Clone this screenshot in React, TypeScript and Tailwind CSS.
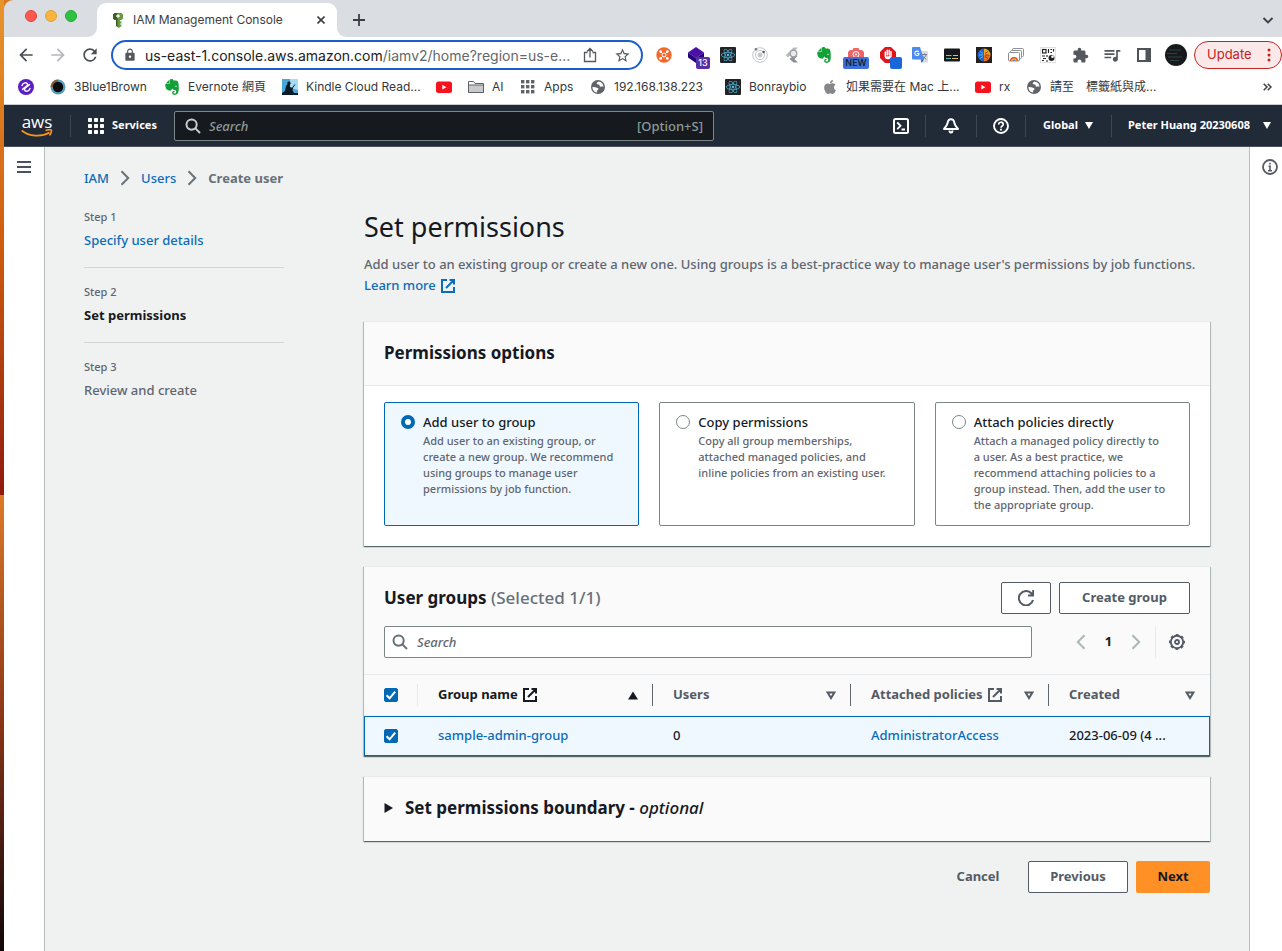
import type { ReactNode } from "react";
import {
  MdArrowBack,
  MdArrowForward,
  MdExtension,
  MdLock,
  MdQueueMusic,
  MdRefresh,
  MdStarBorder,
} from "react-icons/md";
import { FaApple, FaReact } from "react-icons/fa";
import { SiEvernote } from "react-icons/si";

/* ---------- shared drawings ---------- */

const ExternalIcon = () => (
  <svg viewBox="0 0 16 16" className="inline-block size-4 shrink-0" fill="none" stroke="currentColor" strokeWidth="2">
    <path d="M7 2H2v12h12V9M9.5 2H14v4.5M6 10l8-8" />
  </svg>
);

const SearchIcon = () => (
  <svg viewBox="0 0 16 16" className="size-4 shrink-0" fill="none" stroke="currentColor" strokeWidth="2">
    <circle cx="6.6" cy="6.6" r="5.1" />
    <path d="M10.4 10.4 15 15" />
  </svg>
);

const Caret = () => (
  <svg viewBox="0 0 8 7" className="h-[7px] w-2 shrink-0" fill="currentColor">
    <path d="M0 0h8L4 7z" />
  </svg>
);

const SortIcon = () => (
  <svg viewBox="0 0 10 9" className="h-[9px] w-2.5 shrink-0" fill="none" stroke="currentColor" strokeWidth="2">
    <path d="M1.6 1.5h6.8L5 7z" />
  </svg>
);

const Chevron = ({ flip = false }: { flip?: boolean }) => (
  <svg viewBox="0 0 10 16" className="h-4 w-2.5 shrink-0" fill="none" stroke="currentColor" strokeWidth="2">
    <path d={flip ? "M8.5 1.2 1.8 8l6.7 6.8" : "M1.5 1.2 8.2 8l-6.7 6.8"} />
  </svg>
);

const YoutubeIcon = () => (
  <svg viewBox="0 0 16 16" className="size-4">
    <rect y="2.5" width="16" height="11.500" rx="2.5" fill="#f8121d" />
    <path d="M6.3 5.8v4.8L10.4 8.200z" fill="#fff" />
  </svg>
);

const ReactIcon = () => (
  <span className="flex size-4 items-center justify-center rounded-[1px] bg-[#212327] text-[#52bfe0]">
    <FaReact className="size-3.5" />
  </span>
);

const GlobeIcon = () => (
  <svg viewBox="0 0 16 16" className="size-4">
    <circle cx="8" cy="8" r="7" fill="#5f6368" />
    <path
      d="M2.400 8.300c1.500-.6 3.200.4 4.600.5.900.1 1.500.6 1.400 1.400-.1.700-1.200.8-1.300 1.600 0 .8.300 1.300-.2 1.800A5.700 5.700 0 0 1 2.400 8.300zM8.300 2.500c-.6.9-1.700 1-1.600 1.900.1 1 1.500.8 2.400 1.100.9.400 0 1.500.9 2 1 .5 1.800-.3 3.500.2A5.700 5.700 0 0 0 8.300 2.500z"
      fill="#fff"
    />
  </svg>
);

/* ---------- browser chrome ---------- */

const TabStrip = () => (
  <div className="flex h-[37px] items-end bg-[#dadde2]">
    <div className="flex w-[83px] items-center gap-2 self-center pb-[5px] pl-[21px]">
      <span className="size-3 rounded-full border border-[#e0443e] bg-[#fe5850]" />
      <span className="size-3 rounded-full border border-[#dea035] bg-[#fcb43d]" />
      <span className="size-3 rounded-full border border-[#27a83a] bg-[#2fc242]" />
    </div>
    <svg viewBox="0 0 10 10" className="h-2.5 w-2.5 text-white" fill="currentColor">
      <path d="M10 0v10H0c6 0 10-4 10-10z" />
    </svg>
    <div className="flex h-[34px] w-60 items-center rounded-t-[9px] bg-white px-4 text-[12px] text-[#3c4043]">
      <svg viewBox="0 0 10 15" className="h-[15px] w-2.5">
        <path d="M1.500 0h7L10 1.500v4L8.500 7H7v1.500h1.500v2H7v1h1.500V13L6 15l-2-1.200V7H1.500L0 5.500v-4z" fill="#6a9a3f" />
        <path d="M4.500 7v7L3 13V7H1.500L0 5.500v-4L1.500 0h3z" fill="#3d5f26" />
        <path d="M5 1.200v3.600M3.200 3h3.600" stroke="#fff" strokeWidth="1.300" />
      </svg>
      <span className="ml-2.5 grow whitespace-nowrap">IAM Management Console</span>
      <button aria-label="Close tab" className="-mr-2 flex size-4 items-center justify-center text-[#3c4043]">
        <svg viewBox="0 0 8 8" className="size-2" stroke="currentColor" strokeWidth="1.600">
          <path d="m.5.5 7 7M7.500.5l-7 7" />
        </svg>
      </button>
    </div>
    <svg viewBox="0 0 10 10" className="h-2.5 w-2.5 text-white" fill="currentColor">
      <path d="M0 0v10h10C4 10 0 6 0 0z" />
    </svg>
    <button aria-label="New tab" className="mb-[11px] ml-1.5 flex size-3 text-[#3c4043]">
      <svg viewBox="0 0 12 12" className="size-3" stroke="currentColor" strokeWidth="1.800">
        <path d="M6 0v12M0 6h12" />
      </svg>
    </button>
    <button aria-label="Search tabs" className="mr-2 mb-3 ml-auto text-[#3c4043]">
      <svg viewBox="0 0 12 10" className="h-2.5 w-3" fill="none" stroke="currentColor" strokeWidth="1.800">
        <path d="m1.500 3 4.500 4.500L10.500 3" />
      </svg>
    </button>
  </div>
);

const extensions: { name: string; icon: ReactNode }[] = [
  {
    name: "Orange cluster",
    icon: (
      <svg viewBox="0 0 16 16" className="size-4">
        <circle cx="8" cy="8" r="7.700" fill="#f5672b" />
        <path d="M5 5l6 6M11 5l-6 6" stroke="#fff" strokeWidth="1" />
        <g fill="#fff">
          <circle cx="4.600" cy="4.600" r="1.400" />
          <circle cx="11.400" cy="4.600" r="1.400" />
          <circle cx="4.600" cy="11.400" r="1.400" />
          <circle cx="11.400" cy="11.400" r="1.400" />
        </g>
        <circle cx="8" cy="8" r="2" fill="#f5672b" stroke="#fff" />
      </svg>
    ),
  },
  {
    name: "Wappalyzer",
    icon: (
      <span className="relative">
        <svg viewBox="0 0 16 16" className="size-4">
          <path d="M8 0l8 5.500L8 11 0 5.500z" fill="#4a10a8" />
          <path d="M0 5.500L8 11l8-5.500v5L8 16l-8-5.500z" fill="#28047a" />
        </svg>
        <span className="absolute top-2.5 left-2 flex h-3 w-3.5 items-center justify-center rounded-[2px] bg-[#5b2ea6] text-[9px] font-medium text-white">
          13
        </span>
      </span>
    ),
  },
  { name: "React tools", icon: <ReactIcon /> },
  {
    name: "Orbit",
    icon: (
      <svg viewBox="0 0 16 16" className="size-4" fill="none" stroke="#c4c6c8" strokeWidth="1">
        <circle cx="8" cy="8" r="7.300" />
        <circle cx="8" cy="8" r="4.600" />
        <circle cx="8" cy="8" r="2" fill="#c4c6c8" />
        <circle cx="4" cy="2.200" r="1.300" fill="#777" stroke="none" />
        <circle cx="11.600" cy="5" r="1.300" fill="#555" stroke="none" />
      </svg>
    ),
  },
  {
    name: "Arrow search",
    icon: (
      <svg viewBox="0 0 16 16" className="size-4">
        <path d="M9.500.5H14L4 10.500 1.700 8.300z" fill="#b9bbbd" />
        <path d="M9 9h4.500L10.500 12l3.500 3.500H9.500L5.500 12z" fill="#8d9093" />
        <circle cx="9.500" cy="6.500" r="3.300" fill="#e8eaec" stroke="#9da0a3" strokeWidth="1.300" />
      </svg>
    ),
  },
  { name: "Evernote clipper", icon: <SiEvernote className="size-4 text-[#14a038]" /> },
  {
    name: "Camera",
    icon: (
      <span className="relative">
        <svg viewBox="0 0 16 16" className="size-4">
          <path d="M4.500 3l1-2h5l1 2H14l2 2v8H0V5l2-2z" fill="#ee6568" />
          <circle cx="8" cy="7.500" r="3" fill="none" stroke="#fff" />
          <circle cx="8" cy="7.500" r="1" fill="#fff" />
        </svg>
        <span className="absolute top-2.5 -left-[5px] flex h-3 w-[26px] items-center justify-center rounded-[2px] bg-[#3d70d8] text-[9px] font-medium text-[#10182c]">
          NEW
        </span>
      </span>
    ),
  },
  {
    name: "Ad blocker",
    icon: (
      <span className="relative">
        <svg viewBox="0 0 16 16" className="size-4">
          <path d="M5 0h6l5 5v6l-5 5H5l-5-5V5z" fill="#e2141b" />
          <path
            d="M5.300 9V5M7.200 8V3.200M9.200 8V3.200M11 8.500V4.500M5.300 9.500c.5 2.500 5 2.800 5.700-.5"
            stroke="#fff"
            strokeWidth="1.500"
            strokeLinecap="round"
            fill="#fff"
          />
        </svg>
        <span className="absolute top-2.5 left-2.5 size-3 rounded-[2px] bg-[#1967d8]" />
      </span>
    ),
  },
  {
    name: "Google Translate",
    icon: (
      <svg viewBox="0 0 16 16" className="size-4">
        <path d="M6 4h9a1 1 0 0 1 1 1v10.500H9z" fill="#d9dce0" />
        <path d="M0 1a1 1 0 0 1 1-1h7l4 12.500H1a1 1 0 0 1-1-1z" fill="#4c8af0" />
        <path d="M9 12.500h3L9.500 16z" fill="#2f5fbd" />
        <path d="M7.200 6.500H5M6.800 5a2.200 2.200 0 1 0 .4 1.500" fill="none" stroke="#fff" strokeWidth="1.100" />
        <path d="M10 7.500h5M12.500 6.500v1M14 7.500c-.5 2-1.500 3-3 4M11.500 9.500l2.500 3" fill="none" stroke="#687078" strokeWidth=".9" />
      </svg>
    ),
  },
  {
    name: "Subtitles",
    icon: (
      <svg viewBox="0 0 16 16" className="size-4">
        <rect y="1.500" width="16" height="13" rx="1" fill="#17191c" />
        <path d="M2 8.500h5.500" stroke="#e7a08a" strokeWidth="1" />
        <path d="M9 8.500h5M8 11.500h6" stroke="#d9c268" strokeWidth="1" />
        <path d="M2 11.500h5" stroke="#58b9a4" strokeWidth="1" />
      </svg>
    ),
  },
  {
    name: "Brain",
    icon: (
      <svg viewBox="0 0 16 16" className="size-4">
        <rect width="16" height="16" fill="#25201c" />
        <path d="M8 1.500a6.500 6.500 0 0 0 0 13z" fill="#1f66d2" />
        <path d="M8 1.500a6.500 6.500 0 0 1 6.500 6.500H8z" fill="#f2a51e" />
        <path d="M14.500 8A6.500 6.500 0 0 1 8 14.500V8z" fill="#e8701f" />
        <path d="M4 4.500l3 2M3 8h4M4 11.500l3-2" stroke="#6fc3ee" strokeWidth=".8" />
        <path d="M12 4.500l-3 2M13 8H9M12 11.500l-3-2" stroke="#a02a18" strokeWidth=".9" />
      </svg>
    ),
  },
  {
    name: "Rainbow cards",
    icon: (
      <svg viewBox="0 0 16 16" className="size-4">
        <g fill="#fff" stroke="#8d9093" strokeWidth="1">
          <rect x="4.500" y="1.500" width="11" height="8" rx="1" />
          <rect x="2.500" y="3.500" width="11" height="8" rx="1" />
          <rect x=".5" y="5.500" width="11" height="8.500" rx="1" />
        </g>
        <path d="M2 14a4 4 0 0 1 8 0z" fill="#ea4335" />
        <path d="M3.300 14a2.700 2.700 0 0 1 5.400 0z" fill="#fbbc05" />
        <path d="M4.500 14a1.500 1.500 0 0 1 3 0z" fill="#4285f4" />
      </svg>
    ),
  },
  {
    name: "QR code",
    icon: (
      <svg viewBox="0 0 16 16" className="size-4">
        <rect x=".5" y=".5" width="15" height="15" fill="#fff" stroke="#e0e0e0" />
        <g fill="none" stroke="#222" strokeWidth="1.200">
          <rect x="2.500" y="2.500" width="3.500" height="3.500" />
          <path d="M8.500 2v4M10.500 2.500h1.500M13.500 2v2.500M10.500 5.500h1.500M2 9h3M7 8v2M3 11.500h3M2 13.500h2M6 14h2" />
        </g>
        <circle cx="11.500" cy="11" r="3" fill="#222" />
        <circle cx="12.500" cy="9.800" r="1.300" fill="#fff" />
      </svg>
    ),
  },
  { name: "Extensions", icon: <MdExtension className="size-[17px] text-[#55595e]" /> },
  { name: "Media", icon: <MdQueueMusic className="size-5 text-[#55595e]" /> },
  {
    name: "Side panel",
    icon: (
      <svg viewBox="0 0 14 14" className="size-3.5">
        <path d="M0 0h14v14H0z" fill="#50545a" />
        <path d="M2 2h6.500v10H2z" fill="#fff" />
      </svg>
    ),
  },
];

const Toolbar = () => (
  <div className="flex h-9 items-center bg-white text-[#55595e]">
    <div className="flex w-[107px] shrink-0 items-center gap-3 pl-3">
      <button aria-label="Back" className="text-[#4a4e53]">
        <MdArrowBack className="size-5" />
      </button>
      <button aria-label="Forward" className="text-[#b4b6b9]">
        <MdArrowForward className="size-5" />
      </button>
      <button aria-label="Reload" className="text-[#4a4e53]">
        <MdRefresh className="size-5" />
      </button>
    </div>
    <div className="flex h-[30px] min-w-0 grow items-center rounded-full border-2 border-[#1a5dcb] px-2.5">
      <MdLock className="size-3.5 shrink-0" />
      <div className="ml-2 min-w-0 grow truncate text-[14px] text-[#63676b]">
        <span className="text-[#202124]">us-east-1.console.aws.amazon.com</span>/iamv2/home?region=us-e...
      </div>
      <div className="flex shrink-0 items-center gap-4">
        <button aria-label="Share">
          <svg viewBox="0 0 16 16" className="size-4" fill="none" stroke="currentColor" strokeWidth="1.300">
            <path d="M5.500 5.500h-3v9h11v-9h-3M8 10.500V1.500M5 4.500l3-3 3 3" />
          </svg>
        </button>
        <button aria-label="Bookmark this page">
          <MdStarBorder className="size-[17px]" />
        </button>
      </div>
    </div>
    <ul className="ml-[5px] flex shrink-0">
      {extensions.map((e) => (
        <li key={e.name}>
          <button aria-label={e.name} className="flex size-8 items-center justify-center">
            {e.icon}
          </button>
        </li>
      ))}
      <li>
        <button aria-label="Profile" className="flex size-8 items-center justify-center">
          <svg viewBox="0 0 22 22" className="size-[22px]">
            <circle cx="11" cy="11" r="11" fill="#17191b" />
            <path d="M4 6h12M2 9.500h10M3 13h14M5 16.500h9" stroke="#2d4446" />
          </svg>
        </button>
      </li>
    </ul>
    <button className="ml-0.5 flex h-7 w-22 shrink-0 items-center justify-between rounded-full border border-[#c5221f] bg-[#fae9e8] pr-2.5 pl-3 text-[13px] text-[#c5221f]">
      Update
      <svg viewBox="0 0 4 14" className="h-3.5 w-1" fill="currentColor">
        <circle cx="2" cy="2" r="1.500" />
        <circle cx="2" cy="7" r="1.500" />
        <circle cx="2" cy="12" r="1.500" />
      </svg>
    </button>
  </div>
);

const bookmarks: { label: string; width: string; icon: ReactNode }[] = [
  {
    label: "",
    width: "",
    icon: (
      <svg viewBox="0 0 16 16" className="size-4">
        <circle cx="8" cy="8" r="8" fill="#5a1fc4" />
        <path
          d="M4 6.500C5 3.500 8.500 3 9.500 5S6 8.500 4.500 10.500M12 9.500c-1 3-4.500 3.500-5.500 1.500S10 7.500 11.500 5.500"
          fill="none"
          stroke="#fff"
          strokeWidth="1.400"
          strokeLinecap="round"
        />
      </svg>
    ),
  },
  {
    label: "3Blue1Brown",
    width: "w-[74px]",
    icon: (
      <svg viewBox="0 0 16 16" className="size-4">
        <circle cx="8" cy="8" r="7.500" fill="#5b9dbd" />
        <path d="M8 .5v7.500H.5A7.500 7.500 0 0 1 8 .5z" fill="#8a5a3c" />
        <circle cx="8" cy="8" r="5.200" fill="#0a0c10" />
      </svg>
    ),
  },
  { label: "Evernote 網頁", width: "w-[78px]", icon: <SiEvernote className="size-4 text-[#14a038]" /> },
  {
    label: "Kindle Cloud Read...",
    width: "w-[114px]",
    icon: (
      <svg viewBox="0 0 16 16" className="size-4">
        <rect width="16" height="16" fill="#4aa6d6" />
        <path d="M8 0h8v11L8 9z" fill="#a5dcf2" />
        <path d="M0 14l3-2 1-5 1.500-2a1.700 1.700 0 1 1 2.500.5L8 8l3 1-.5 2.500 1.500 2.500h4v2H0z" fill="#0b1a26" />
        <path d="M10 9.500l3-4" stroke="#0b1a26" />
      </svg>
    ),
  },
  { label: "", width: "", icon: <YoutubeIcon /> },
  {
    label: "AI",
    width: "w-[12px]",
    icon: (
      <svg viewBox="0 0 16 16" className="size-4" stroke="#5f6368">
        <path d="M.5 13.500v-11h5l1.500 2h8.500v9z" fill="#fff" />
        <path d="M.5 6h15v7.500H.5z" fill="#c9cacc" />
      </svg>
    ),
  },
  {
    label: "Apps",
    width: "w-[30px]",
    icon: (
      <svg viewBox="0 0 16 16" className="size-4" fill="#5f6368">
        {[1, 6, 11].map((y) =>
          [1, 6, 11].map((x) => <rect key={`${x}-${y}`} x={x} y={y} width="3.400" height="3.400" />),
        )}
      </svg>
    ),
  },
  { label: "192.168.138.223", width: "w-[95px]", icon: <GlobeIcon /> },
  { label: "Bonraybio", width: "w-[57px]", icon: <ReactIcon /> },
  { label: "如果需要在 Mac 上...", width: "w-[113px]", icon: <FaApple className="size-4 text-[#85878a]" /> },
  { label: "rx", width: "w-[11px]", icon: <YoutubeIcon /> },
  { label: "請至　標籤紙與成...", width: "w-[106px]", icon: <GlobeIcon /> },
];

const BookmarksBar = () => (
  <nav
    aria-label="Bookmarks"
    className="flex h-8 items-center border-b border-[#c9ccd1] bg-white px-3.5 pb-[3px] text-[12px] text-[#34373b]"
  >
    <ul className="flex grow gap-4">
      {bookmarks.map((b, i) => (
        <li key={i}>
          <a href="#" aria-label={b.label || "Bookmark"} className="flex h-4 items-center gap-2 whitespace-nowrap">
            {b.icon}
            {b.label && <span className={b.width}>{b.label}</span>}
          </a>
        </li>
      ))}
    </ul>
    <button aria-label="More bookmarks" className="-mr-1 text-[#3c4043]">
      <svg viewBox="0 0 9 8" className="h-2 w-[9px]" fill="none" stroke="currentColor" strokeWidth="1.500">
        <path d="M.7.700 4 4 .7 7.300M4.700.7 8 4 4.700 7.300" />
      </svg>
    </button>
  </nav>
);

/* ---------- AWS header ---------- */

const Divider = () => <span className="h-[22px] w-px shrink-0 bg-[#3d4653]" />;

const AwsHeader = () => (
  <header className="flex h-[42px] items-center border-b border-[#49505b] bg-[#212a37] text-[11px] font-bold text-white">
    <a href="#" aria-label="AWS home" className="flex w-[66px] shrink-0 flex-col items-center">
      <span className="font-['Open_Sans',sans-serif] text-[17px] leading-[14px] font-medium">aws</span>
      <svg viewBox="0 0 32 8" className="h-2 w-8" fill="none" stroke="#f7931e" strokeWidth="1.700">
        <path d="M.7 1.500C8 7.500 20 8.500 28.500 3.500M24.500 1.500c4-1.200 6-.8 6 .2s-.6 3-2 4.800" />
      </svg>
    </a>
    <Divider />
    <button className="ml-[17px] flex shrink-0 items-center gap-2">
      <svg viewBox="0 0 16 16" className="size-4" fill="currentColor">
        {[0, 6, 12].map((y) =>
          [0, 6, 12].map((x) => <rect key={`${x}-${y}`} x={x} y={y} width="4" height="4" rx=".8" />),
        )}
      </svg>
      <span className="w-[45px]">Services</span>
    </button>
    <label className="ml-[17px] flex h-[30px] w-[540px] items-center rounded-[2px] border border-[#7b8787] bg-[#16191d] px-2.5 text-[13px] font-medium text-[#8d9a99]">
      <span className="text-[#c8cdcd]">
        <SearchIcon />
      </span>
      <input
        type="text"
        aria-label="Search services"
        placeholder="Search"
        className="ml-2 min-w-0 grow bg-transparent pt-0.5 outline-none placeholder:text-[#8d9a99] placeholder:italic"
      />
      <span className="pt-0.5">[Option+S]</span>
    </label>
    <div className="ml-auto flex shrink-0 items-center">
      <button aria-label="CloudShell" className="flex w-12 justify-center">
        <svg viewBox="0 0 16 16" className="size-4" fill="none" stroke="currentColor" strokeWidth="2">
          <rect x="1" y="1" width="14" height="14" rx="1.500" />
          <path d="m4.200 4.500 3.300 3.300-3.300 3.300M8.500 11.500H12" strokeWidth="1.800" />
        </svg>
      </button>
      <Divider />
      <button aria-label="Notifications" className="flex w-[50px] justify-center">
        <svg viewBox="0 0 16 16" className="size-4" fill="none" stroke="currentColor" strokeWidth="1.900" strokeLinejoin="round">
          <path d="M8 1.200c1.800 0 3 1.300 3.200 3 .3 2.500 1.600 4.300 3.800 6.800H1c2.200-2.500 3.500-4.300 3.800-6.800.2-1.700 1.400-3 3.200-3z" />
          <path d="M6.500 12.500c0 2.700 3 2.700 3 0" />
        </svg>
      </button>
      <Divider />
      <button aria-label="Help" className="flex w-12 justify-center">
        <svg viewBox="0 0 16 16" className="size-4" fill="none" stroke="currentColor" strokeWidth="1.900">
          <circle cx="8" cy="8" r="7" />
          <path d="M5.700 6.500c0-3 4.600-3 4.600-.2C10.300 8 8 7.900 8 9.700" strokeWidth="1.700" />
          <path d="M8 10.800v1.700" />
        </svg>
      </button>
      <Divider />
      <button className="flex w-[85px] items-center gap-[7px] pl-[17px]">
        <span className="w-[35px]">Global</span>
        <Caret />
      </button>
      <Divider />
      <button className="flex items-center gap-[7px] pr-[11px] pl-4">
        <span className="w-[128px] text-left whitespace-nowrap">Peter Huang 20230608</span>
        <Caret />
      </button>
    </div>
  </header>
);

/* ---------- page ---------- */

const steps = [
  { step: "Step 1", title: "Specify user details", state: "link" },
  { step: "Step 2", title: "Set permissions", state: "current" },
  { step: "Step 3", title: "Review and create", state: "todo" },
];

const StepList = () => (
  <nav aria-label="Steps">
    <ol>
      {steps.map((s, i) => (
        <li key={s.step} className={i < steps.length - 1 ? "border-b border-[#d0d5d5] py-4" : "py-4"}>
          <div className="text-[11px] leading-4 text-[#5f6670]">{s.step}</div>
          <div className="mt-1 text-[13px] leading-[22px]">
            {s.state === "link" && (
              <a href="#" className="text-[#0b6cb8]">
                {s.title}
              </a>
            )}
            {s.state === "current" && <span className="font-bold text-[#16191f]">{s.title}</span>}
            {s.state === "todo" && <span className="text-[#5f6670]">{s.title}</span>}
          </div>
        </li>
      ))}
    </ol>
  </nav>
);

const Card = ({ children }: { children: ReactNode }) => (
  <section className="border-t border-[#e6eaea] bg-white shadow-[0_1px_1px_0_rgba(0,28,36,0.45),1px_1px_1px_0_rgba(0,28,36,0.2),-1px_1px_1px_0_rgba(0,28,36,0.2)]">
    {children}
  </section>
);

const options = [
  {
    title: "Add user to group",
    text: "Add user to an existing group, or create a new group. We recommend using groups to manage user permissions by job function.",
  },
  {
    title: "Copy permissions",
    text: "Copy all group memberships, attached managed policies, and inline policies from an existing user.",
  },
  {
    title: "Attach policies directly",
    text: "Attach a managed policy directly to a user. As a best practice, we recommend attaching policies to a group instead. Then, add the user to the appropriate group.",
  },
];

const PermissionOptions = () => (
  <Card>
    <h2 className="border-b border-[#e6eaea] bg-[#fafafa] px-5 pt-[19px] pb-[21px] text-[17px] leading-[23px] font-bold">
      Permissions options
    </h2>
    <div className="grid grid-cols-3 gap-5 px-5 pt-4 pb-5">
      {options.map((o, i) => (
        <label
          key={o.title}
          className="flex gap-2 rounded-[2px] border border-[#7b8787] pt-2 pr-[23px] pb-3 pl-4 has-checked:border-[#0068b4] has-checked:bg-[#f0f8ff]"
        >
          <input
            type="radio"
            name="permission-option"
            defaultChecked={i === 0}
            className="mt-1 size-3.5 shrink-0 appearance-none rounded-full border border-[#7b8787] bg-white checked:border-4 checked:border-[#0068b4]"
          />
          <span className="block">
            <span className="block text-[13px] leading-[22px]">{o.title}</span>
            <span className="block text-[11px] leading-4 text-[#5f6670]">{o.text}</span>
          </span>
        </label>
      ))}
    </div>
  </Card>
);

const Checkbox = ({ label }: { label: string }) => (
  <label className="grid size-3.5">
    <input
      type="checkbox"
      aria-label={label}
      defaultChecked
      className="peer col-start-1 row-start-1 size-3.5 appearance-none rounded-[2px] border border-[#7b8787] bg-white checked:border-[#0068b4] checked:bg-[#0068b4]"
    />
    <svg
      viewBox="0 0 14 14"
      className="invisible col-start-1 row-start-1 size-3.5 peer-checked:visible"
      fill="none"
      stroke="#fff"
      strokeWidth="2"
    >
      <path d="m2.600 7.300 3 3L11.200 3.600" />
    </svg>
  </label>
);

const HeadCell = ({ children, icon, last = false }: { children: ReactNode; icon: ReactNode; last?: boolean }) => (
  <th scope="col" className="p-0 font-bold">
    <div className={last ? "flex h-10 items-center pr-[15px] pl-5" : "flex h-10 items-center pl-5"}>
      <button className="flex grow items-center justify-between">
        <span className="flex items-center gap-1 whitespace-nowrap">{children}</span>
        {icon}
      </button>
      {!last && <span className="ml-3.5 h-[22px] w-px bg-[#5f6670]" />}
    </div>
  </th>
);

const UserGroups = () => (
  <Card>
    <div className="border-b border-[#e6eaea] bg-[#fafafa] px-5 pt-[15px] pb-4">
      <div className="flex items-center gap-2">
        <h2 className="grow text-[17px] leading-6 font-bold">
          User groups <span className="font-medium text-[#687078]">(Selected 1/1)</span>
        </h2>
        <button
          aria-label="Refresh"
          className="flex h-8 w-[50px] items-center justify-center rounded-[2px] border border-[#545b64] bg-white text-[#545b64]"
        >
          <svg viewBox="0 0 16 16" className="size-4" fill="none" stroke="currentColor" strokeWidth="2">
            <path d="M15 10A7.200 7.200 0 1 1 13.500 3.500L15 5.200M15.200 0v5.500H10" />
          </svg>
        </button>
        <button className="h-8 w-[131px] rounded-[2px] border border-[#545b64] bg-white text-[13px] font-bold text-[#545b64]">
          Create group
        </button>
      </div>
      <div className="mt-3 flex items-center">
        <label className="flex h-8 min-w-0 grow items-center rounded-[2px] border border-[#7b8787] bg-white px-[7px] text-[13px] text-[#687078]">
          <SearchIcon />
          <input
            type="text"
            aria-label="Search user groups"
            placeholder="Search"
            className="ml-[9px] min-w-0 grow bg-transparent pt-0.5 outline-none placeholder:text-[#5f6670] placeholder:italic"
          />
        </label>
        <div className="ml-11 flex shrink-0 items-center text-[#aab7b8]">
          <button aria-label="Previous page">
            <Chevron flip />
          </button>
          <button className="mx-[9px] w-[27px] text-[13px] font-bold text-[#16191f]">1</button>
          <button aria-label="Next page">
            <Chevron />
          </button>
          <span className="ml-3.5 h-8 w-px bg-[#e6eaea]" />
          <button aria-label="Preferences" className="mr-[5px] ml-[13px] text-[#545b64]">
            <svg viewBox="0 0 16 16" className="size-4" fill="none" stroke="currentColor">
              <circle cx="8" cy="8" r="6.200" strokeWidth="1.900" />
              <circle cx="8" cy="8" r="7.200" strokeWidth="1.600" strokeDasharray="2.800 2.855" strokeDashoffset="1.400" />
              <circle cx="8" cy="8" r="2" strokeWidth="1.800" />
            </svg>
          </button>
        </div>
      </div>
    </div>
    <table className="w-full table-fixed text-left text-[13px]">
      <colgroup>
        <col className="w-[54px]" />
        <col />
        <col className="w-[198px]" />
        <col className="w-[198px]" />
        <col className="w-[161px]" />
      </colgroup>
      <thead className="border-b border-[#f0f2f2] bg-[#fafafa] text-[#545b64]">
        <tr>
          <th scope="col" className="p-0">
            <div className="flex h-10 items-center justify-between pl-5">
              <Checkbox label="Select all groups" />
              <span className="h-[22px] w-px bg-[#e6eaea]" />
            </div>
          </th>
          <HeadCell
            icon={
              <svg viewBox="0 0 10 9" className="h-[9px] w-2.5 shrink-0" fill="#16191f">
                <path d="M0 8.500h10L5 .5z" />
              </svg>
            }
          >
            <span className="text-[#16191f]">Group name</span>
            <span className="flex text-[#16191f]">
              <ExternalIcon />
            </span>
          </HeadCell>
          <HeadCell icon={<SortIcon />}>Users</HeadCell>
          <HeadCell icon={<SortIcon />}>
            Attached policies <ExternalIcon />
          </HeadCell>
          <HeadCell icon={<SortIcon />} last>
            Created
          </HeadCell>
        </tr>
      </thead>
      <tbody>
        <tr className="h-10 bg-[#f0f8ff] outline outline-1 -outline-offset-1 outline-[#0068b4]">
          <td className="p-0 pl-5">
            <Checkbox label="Select sample-admin-group" />
          </td>
          <td className="p-0 pl-5">
            <a href="#" className="text-[#0b6cb8]">
              sample-admin-group
            </a>
          </td>
          <td className="p-0 pl-5">0</td>
          <td className="p-0 pl-5">
            <a href="#" className="text-[#0b6cb8]">
              AdministratorAccess
            </a>
          </td>
          <td className="p-0 pl-5 whitespace-nowrap">2023-06-09 (4 ...</td>
        </tr>
      </tbody>
    </table>
  </Card>
);

export default function App() {
  return (
    <div className="flex min-h-screen bg-[#d9791f] font-['Inter','Noto_Sans_CJK_TC',sans-serif]">
      <div className="flex w-1 shrink-0 flex-col">
        <div className="h-[495px] bg-linear-to-b from-[#e8952c] via-[#cf5a0c] to-[#8e1a0e]" />
        <div className="grow bg-linear-to-b from-[#dd7a28] via-[#8a3416] to-[#120708]" />
      </div>
      <div className="flex min-w-0 grow flex-col overflow-hidden rounded-tl-[9px]">
        <TabStrip />
        <Toolbar />
        <BookmarksBar />
        <div className="flex grow flex-col font-['Noto_Sans',sans-serif] font-medium text-[#16191f]">
          <AwsHeader />
          <div className="flex grow bg-[#f0f2f2]">
            <aside className="w-[41px] shrink-0 border-r border-[#b8bdbf] bg-white pt-[13px] pl-[13px]">
              <button aria-label="Open navigation" className="block text-[#4a525e]">
                <svg viewBox="0 0 14 14" className="size-3.5" stroke="currentColor" strokeWidth="2">
                  <path d="M0 2h14M0 7h14M0 12h14" />
                </svg>
              </button>
            </aside>
            <main className="min-w-0 grow px-[39px] pt-[21px]">
              <nav aria-label="Breadcrumb" className="flex items-center gap-[11px] text-[13px] leading-5 text-[#687078]">
                <a href="#" className="text-[#0b6cb8]">
                  IAM
                </a>
                <Chevron />
                <a href="#" className="text-[#0b6cb8]">
                  Users
                </a>
                <Chevron />
                <span className="font-bold">Create user</span>
              </nav>
              <div className="mt-[5px] grid grid-cols-[200px_minmax(0,1fr)] gap-20">
                <StepList />
                <div className="pt-[17px]">
                  <h1 className="text-[27px] leading-[34px] font-normal">Set permissions</h1>
                  <p className="mt-2.5 text-[13px] leading-[21px] text-[#5f6670]">
                    Add user to an existing group or create a new one. Using groups is a best-practice way to manage
                    user's permissions by job functions.{" "}
                    <a href="#" className="inline-flex items-center gap-1 whitespace-nowrap text-[#0b6cb8]">
                      Learn more <ExternalIcon />
                    </a>
                  </p>
                  <div className="mt-[25px] flex flex-col gap-5">
                    <PermissionOptions />
                    <UserGroups />
                    <Card>
                      <h2 className="bg-[#fafafa] px-5 pt-[19px] pb-[21px] text-[17px] leading-6 font-bold">
                        <button className="flex items-center gap-3">
                          <svg viewBox="0 0 9 10" className="h-2.5 w-[9px]" fill="currentColor">
                            <path d="M.5 0v10L9 5z" />
                          </svg>
                          <span>
                            Set permissions boundary - <span className="font-medium italic">optional</span>
                          </span>
                        </button>
                      </h2>
                    </Card>
                    <div className="flex items-center justify-end gap-2 text-[13px] font-bold text-[#545b64]">
                      <button className="h-8 w-[84px]">Cancel</button>
                      <button className="h-8 w-[100px] rounded-[2px] border border-[#545b64] bg-white">Previous</button>
                      <button className="h-8 w-[74px] rounded-[2px] bg-[#ff9025] text-[#16191f]">Next</button>
                    </div>
                  </div>
                </div>
              </div>
            </main>
            <aside className="w-[33px] shrink-0 border-l border-[#b8bdbf] bg-white pt-3 pl-3">
              <button aria-label="Open info panel" className="block text-[#545b64]">
                <svg viewBox="0 0 16 16" className="size-4" fill="none" stroke="currentColor" strokeWidth="1.800">
                  <circle cx="8" cy="8" r="7" />
                  <path d="M6.500 7.300H8v3.900M6 11.700h4M8 3.700v1.900" strokeWidth="1.600" />
                </svg>
              </button>
            </aside>
          </div>
        </div>
      </div>
    </div>
  );
}
